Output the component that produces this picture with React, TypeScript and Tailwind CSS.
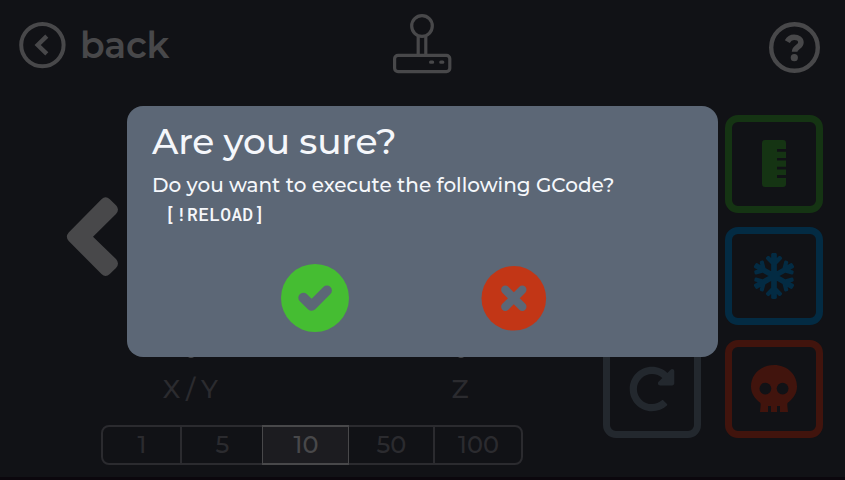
import type { ReactNode } from "react";
import { FaRedoAlt, FaSnowflake } from "react-icons/fa";

function BackIcon() {
  return (
    <svg width="48" height="48" viewBox="0 0 48 48" fill="none" stroke="#48484a" strokeWidth="4">
      <circle cx="24.400" cy="24.100" r="21.200" />
      <path d="M28.800 15.200 19.700 24l9.100 8.800" strokeWidth="4.400" />
    </svg>
  );
}

function JoystickIcon() {
  return (
    <svg width="60" height="62" viewBox="0 0 60 62" fill="none" stroke="#48484a" strokeWidth="3.2">
      <circle cx="29" cy="13" r="10.300" />
      <path d="M25.200 23V42M32.800 23V42" />
      <rect x="1.600" y="42.300" width="55.200" height="16.400" rx="3.400" />
      <path d="M37.600 49.200h2M47.800 49.200h2" strokeLinecap="round" strokeWidth="3.200" />
    </svg>
  );
}

function HelpIcon() {
  return (
    <svg width="52" height="52" viewBox="0 0 52 52" fill="none" stroke="#48484a">
      <circle cx="26.500" cy="25.500" r="23.300" strokeWidth="4.400" />
      <path d="M19.300 19.600c1.400-2.700 3.700-4.300 6.800-4.300 4 0 6.800 2 6.800 5.100 0 4.700-6.300 4.500-6.300 9.400" strokeWidth="5.600" />
      <circle cx="26.300" cy="35.700" r="3.600" fill="#48484a" stroke="none" />
    </svg>
  );
}

function RulerIcon() {
  return (
    <svg width="24" height="47" viewBox="0 0 24 47" fill="#153413" className="-mt-px">
      <path d="M3 0h18a3 3 0 0 1 3 3v6h-9v2.7h9v6.2h-9v2.7h9v6.1h-9v2.7h9V35h-9v3h9v6a3 3 0 0 1-3 3H3a3 3 0 0 1-3-3V3a3 3 0 0 1 3-3z" />
    </svg>
  );
}

function SkullIcon() {
  return (
    <svg width="46" height="47" viewBox="0 0 46 47" className="-mt-px">
      <path
        fill="#41140d"
        d="M23 0C10 0 0 9.200 0 21.500c0 7 4 12.500 9.200 16.200.7.800.6 2-.2 9.300h8v-6h3v6h6v-6h3v6h8c-.8-7.300-.9-8.500-.2-9.300C42 34 46 28.500 46 21.500 46 9.200 36 0 23 0z"
      />
      <circle cx="14.400" cy="23.600" r="5.900" fill="#111216" />
      <circle cx="31.600" cy="23.600" r="5.900" fill="#111216" />
    </svg>
  );
}

function Tile({ className, children }: { className: string; children: ReactNode }) {
  return (
    <button className={`flex size-[98px] items-center justify-center rounded-[13px] border-[7px] ${className}`}>
      {children}
    </button>
  );
}

function Chevron() {
  return (
    <svg width="53" height="82" viewBox="0 0 53 82">
      <path
        fill="#48484a"
        d="M35.500 3.200Q39.500-.600 43.800 3.200L50 9.300Q54 13.500 50 18L27 40.700 50 63Q54 67.500 50 72L43.800 78.100Q39.500 82 35.500 78.100L2.700 45Q-1 40.700 2.700 36.400Z"
      />
    </svg>
  );
}

const steps = [
  { label: "1", style: "w-[79px] border-r-2 border-[#2b2b2f] pl-px text-[#2b2b2f]" },
  { label: "5", style: "w-[80px] pl-px text-[#2b2b2f]" },
  { label: "10", style: "-my-[2px] w-[87px] border-x border-y-2 border-[#48484a] bg-[#1c1c20] pl-px text-[#48484a]" },
  { label: "50", style: "w-[86px] border-r-2 border-[#2b2b2f] pl-px text-[#2b2b2f]" },
  { label: "100", style: "flex-1 pl-px text-[#2b2b2f]" },
];

export default function App() {
  return (
    <div className="relative flex h-[480px] w-[845px] flex-col overflow-hidden border-b-[3px] border-[#0b070d] bg-[#111216] font-['Montserrat','Inter',sans-serif]">
      <header className="flex h-[95px] shrink-0 items-start justify-between pr-[25px] pl-[18px]">
        <button className="mt-5 flex w-[375px] items-center gap-[14px] text-[36px] leading-[48px] font-semibold tracking-[-0.2px] text-[#48484a]">
          <BackIcon />
          <span className="mt-px">back</span>
        </button>
        <div className="mt-[13px] flex-1">
          <JoystickIcon />
        </div>
        <div className="mt-[22px]">
          <HelpIcon />
        </div>
      </header>

      <main className="flex flex-1">
        <section className="flex w-[603px] shrink-0 flex-col pt-[101px]">
          <div className="h-[82px] pl-[66px]">
            <Chevron />
          </div>
          <div className="mt-[95px] flex h-8 items-center text-[26px] leading-8 font-medium text-[#2b2b2f]">
            <span className="w-[380px] text-center tracking-[-0.6px]">X / Y</span>
            <span className="w-[160px] text-center">Z</span>
          </div>
          <div className="mt-[20px] ml-[101px] flex h-10 w-[422px] rounded-lg border-2 border-[#2b2b2f] text-[24px] font-medium">
            {steps.map((s) => (
              <div key={s.label} className={`flex items-center justify-center ${s.style}`}>
                {s.label}
              </div>
            ))}
          </div>
        </section>

        <aside className="grid h-[343px] grid-cols-[98px_98px] content-between gap-x-6 pt-5">
          <Tile className="col-start-2 border-[#153413]">
            <RulerIcon />
          </Tile>
          <Tile className="col-start-2 -mt-px border-[#032b43]">
            <FaSnowflake size={46} color="#032b43" />
          </Tile>
          <Tile className="border-[#23282e]">
            <FaRedoAlt size={46} color="#23282e" />
          </Tile>
          <Tile className="border-[#41140d]">
            <SkullIcon />
          </Tile>
        </aside>
      </main>

      <div className="absolute top-[350px] left-[187px] size-2 rounded-full bg-[#48484a]" />
      <div className="absolute top-[350px] left-[457px] size-2 rounded-full bg-[#48484a]" />

      <div role="dialog" className="absolute top-[106px] left-[127px] h-[251px] w-[591px] rounded-2xl bg-[#5c6776] pt-3 pl-[25px] text-[#f5f7fb]">
        <h1 className="text-[36px] leading-[46px] font-medium tracking-[-0.2px] whitespace-nowrap">Are you sure?</h1>
        <p className="mt-[7px] text-[20px] leading-7 font-medium tracking-[-0.01px] whitespace-nowrap">
          Do you want to execute the following GCode?
        </p>
        <pre className="mt-[3px] ml-[13px] font-['Roboto_Mono','DejaVu_Sans_Mono',monospace] text-[18px] leading-6 font-medium tracking-[0.25px]">[!RELOAD]</pre>
        <div className="mt-[37px] flex items-center gap-[131px] pl-[128px]">
          <button>
            <svg width="70" height="70" viewBox="0 0 70 70">
              <circle cx="35" cy="35" r="34" fill="#45bd32" />
              <path d="m23.300 34.700 8.400 8.100 15.200-15.300" fill="none" stroke="#5c6776" strokeWidth="10" strokeLinecap="round" strokeLinejoin="round" />
            </svg>
          </button>
          <button className="-mt-px">
            <svg width="66" height="66" viewBox="0 0 66 66">
              <circle cx="32.800" cy="33.300" r="32.300" fill="#c23616" />
              <path d="m24.300 24.800 17 17M41.300 24.800l-17 17" stroke="#5c6776" strokeWidth="8.400" strokeLinecap="round" />
            </svg>
          </button>
        </div>
      </div>
    </div>
  );
}
